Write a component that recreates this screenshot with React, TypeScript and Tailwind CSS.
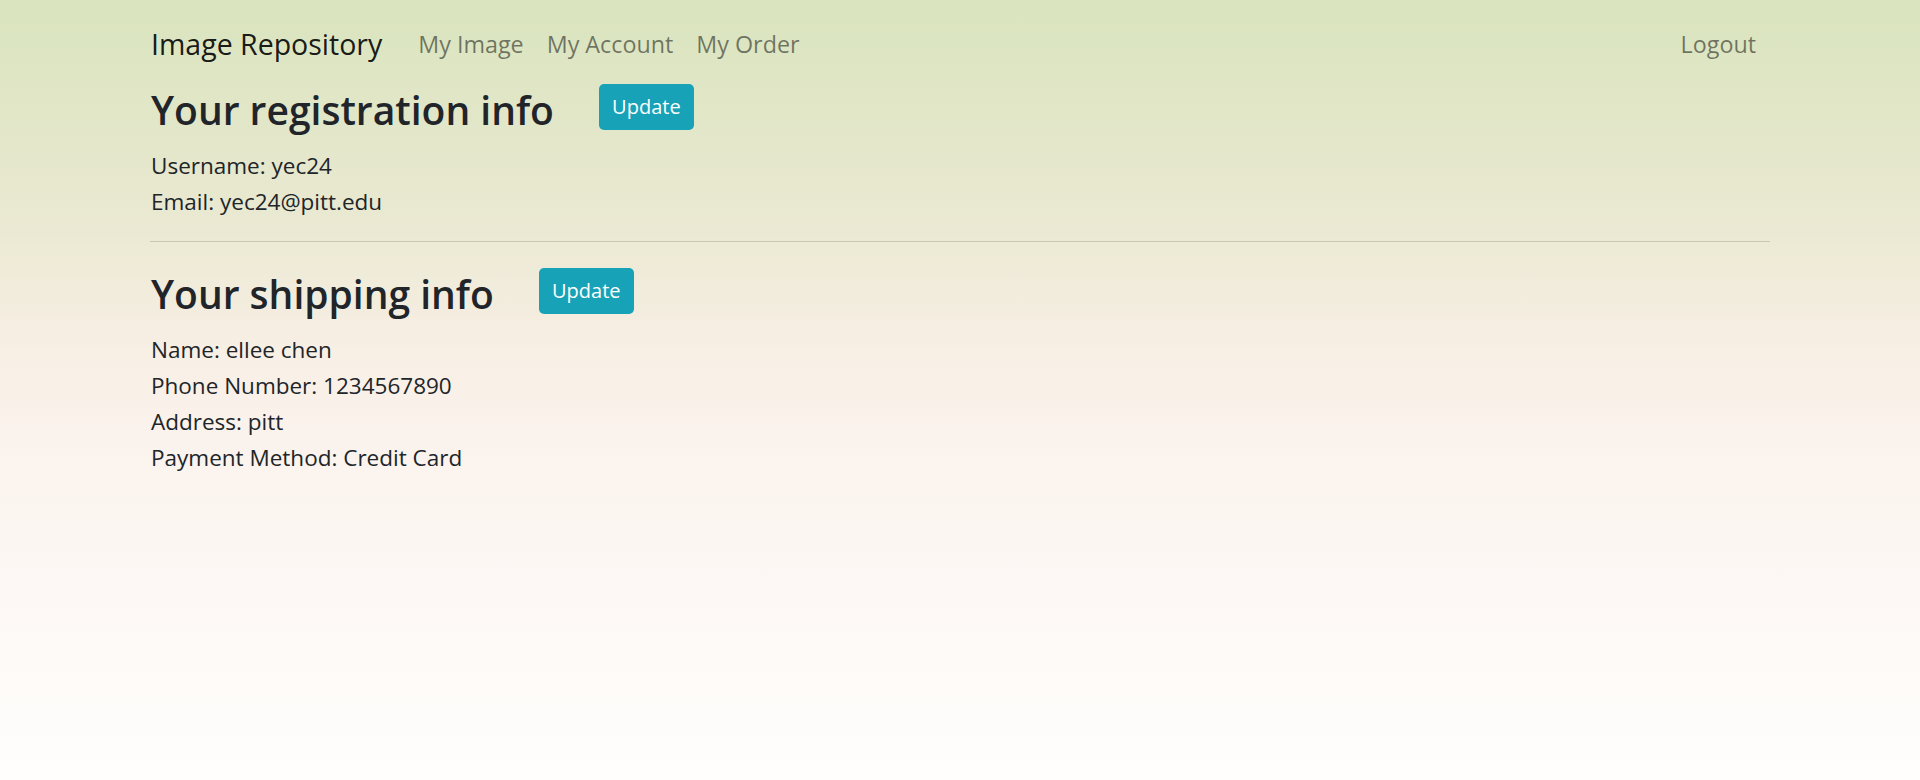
import React from "react";

type InfoSection = {
  title: string;
  rows: { label: string; value: string }[];
};

const sections: InfoSection[] = [
  {
    title: "Your registration info",
    rows: [
      { label: "Username", value: "yec24" },
      { label: "Email", value: "yec24@pitt.edu" },
    ],
  },
  {
    title: "Your shipping info",
    rows: [
      { label: "Name", value: "ellee chen" },
      { label: "Phone Number", value: "1234567890" },
      { label: "Address", value: "pitt" },
      { label: "Payment Method", value: "Credit Card" },
    ],
  },
];

const navLinks = ["My Image", "My Account", "My Order"];

const App: React.FC = () => {
  return (
    <div
      className="min-h-[780px] w-full bg-[linear-gradient(to_bottom,#d9e4bd_0%,#ebe9d3_30%,#f8efe5_45%,#fbf4ef_60%,#fffefd_100%)] text-[#212529]"
      style={{ fontFamily: '"Open Sans", "Noto Sans", sans-serif' }}
    >
      <div className="px-[150px]">
        {/* Navbar */}
        <nav className="h-[84px] pt-[4px] flex items-center">
          <span className="text-[28.5px] text-black/90 pl-px">Image Repository</span>
          <div className="flex items-center ml-[36px] gap-[23px] text-[23.3px] text-black/50">
            {navLinks.map((label) => (
              <a key={label} href="#" className="hover:text-black/70">
                {label}
              </a>
            ))}
          </div>
          <a href="#" className="ml-auto mr-[14px] text-[23.3px] text-black/50">
            Logout
          </a>
        </nav>

        {sections.map((section, index) => (
          <section key={section.title}>
            {index > 0 && <hr className="mt-[21px] mb-[26px] border-0 border-t border-black/15" />}
            <div className="flex items-start">
              <h2 className="text-[39px] leading-[52px] font-semibold pl-px">{section.title}</h2>
              <button className="ml-[45px] w-[95px] h-[46px] rounded-[5px] bg-[#17a2b8] text-white text-[20px] leading-none flex items-center justify-center">
                Update
              </button>
            </div>
            <div className="mt-[12px] text-[22.5px] leading-[36px] pl-px">
              {section.rows.map((row) => (
                <div key={row.label}>
                  {row.label}: {row.value}
                </div>
              ))}
            </div>
          </section>
        ))}
      </div>
    </div>
  );
};

export default App;
